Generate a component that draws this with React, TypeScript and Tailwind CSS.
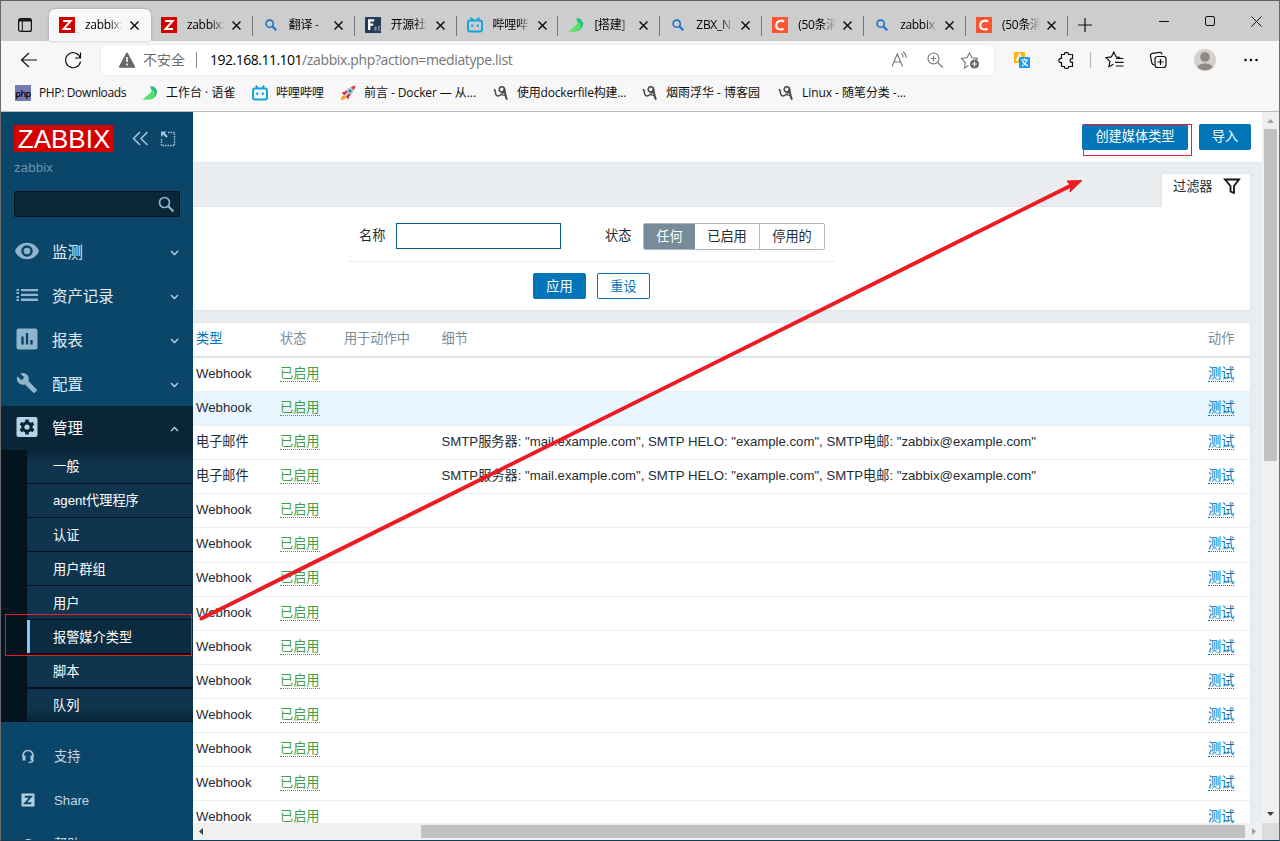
import React from 'react';
import clsx from 'clsx';

type IconName = 'zabbix' | 'search' | 'f2c' | 'bili' | 'bird' | 'csdn' | 'php' | 'rocket' | 'cnblogs';

interface Tab {
  icon: IconName;
  title: string;
}

const TABS: Tab[] = [
  { icon: 'zabbix', title: 'zabbix:' },
  { icon: 'zabbix', title: 'zabbix:' },
  { icon: 'search', title: '翻译 -' },
  { icon: 'f2c', title: '开源社' },
  { icon: 'bili', title: '哔哩哔' },
  { icon: 'bird', title: '[搭建]' },
  { icon: 'search', title: 'ZBX_N' },
  { icon: 'csdn', title: '(50条消' },
  { icon: 'search', title: 'zabbix_' },
  { icon: 'csdn', title: '(50条消' },
];

const BOOKMARKS: { icon: IconName; title: string; box: string }[] = [
  { icon: 'php', title: 'PHP: Downloads', box: 'w-[127px] tracking-[-0.36px]' },
  { icon: 'bird', title: '工作台 · 语雀', box: 'w-[110px]' },
  { icon: 'bili', title: '哔哩哔哩', box: 'w-[88px]' },
  { icon: 'rocket', title: '前言 - Docker — 从...', box: 'w-[153px] tracking-[-0.08px]' },
  { icon: 'cnblogs', title: '使用dockerfile构建...', box: 'w-[149px] tracking-[-0.2px]' },
  { icon: 'cnblogs', title: '烟雨浮华 - 博客园', box: 'w-[136px]' },
  { icon: 'cnblogs', title: 'Linux - 随笔分类 -...', box: 'w-[140px] tracking-[-0.05px]' },
];

const SUBMENU = ['一般', 'agent代理程序', '认证', '用户群组', '用户', '报警媒介类型', '脚本', '队列'];

const SMTP = 'SMTP服务器: "mail.example.com", SMTP HELO: "example.com", SMTP电邮: "zabbix@example.com"';

const ROWS = [
  { type: 'Webhook', details: '' },
  { type: 'Webhook', details: '' },
  { type: '电子邮件', details: SMTP },
  { type: '电子邮件', details: SMTP },
  ...Array.from({ length: 10 }, () => ({ type: 'Webhook', details: '' })),
];

function SiteIcon({ name }: { name: IconName }) {
  switch (name) {
    case 'zabbix':
      return (
        <svg width="16" height="16" viewBox="0 0 16 16" className="shrink-0">
          <rect width="16" height="16" fill="#d40000" />
          <path d="M4.2 4h7.4L4.6 12h7.4" fill="none" stroke="#fff" strokeWidth="2" />
        </svg>
      );
    case 'search':
      return (
        <svg width="16" height="16" viewBox="0 0 16 16" className="shrink-0" fill="none" stroke="#1b74c9">
          <circle cx="6.7" cy="6.7" r="3.6" strokeWidth="1.6" />
          <path d="M9.3 9.3l4 4" strokeWidth="2" />
        </svg>
      );
    case 'f2c':
      return (
        <svg width="16" height="16" viewBox="0 0 16 16" className="shrink-0">
          <rect width="16" height="16" fill="#253b57" />
          <path d="M4.2 13V3.4h5M4.2 7.6h4" fill="none" stroke="#fff" strokeWidth="2.3" />
          <path d="M9.5 10.2h1.7v1.4H9.8v1.6h1.7M15.5 9.6h-1.8v3.6h1.8" fill="none" stroke="#b9c4d0" strokeWidth=".8" />
        </svg>
      );
    case 'bili':
      return (
        <svg width="16" height="16" viewBox="0 0 16 16" className="shrink-0" fill="none" stroke="#13a5dc" strokeWidth="2">
          <path d="M3.8 .6l2 2.800M12.200 .6l-2 2.800" />
          <rect x="1" y="3.600" width="14" height="11" rx="2" />
          <path d="M5.200 7.400v2.600M10.800 7.400v2.600" />
        </svg>
      );
    case 'bird':
      return (
        <svg width="16" height="16" viewBox="0 0 16 16" className="shrink-0">
          <path d="M8.200 1.400c3-.6 5 .5 5.400 2.400.3 1.200 2 .9 1.500 2.700-.4 5-4.200 8.300-8.600 8L10.500 8z" fill="#25bf79" />
          <path d="M10.900 4.800C8.500 8.500 4.500 11 .5 14.600c5.500.4 10.500-.2 11.800-3.900.8-2.400.1-4.200-1.400-5.900z" fill="#5be06a" />
        </svg>
      );
    case 'csdn':
      return (
        <svg width="16" height="16" viewBox="0 0 16 16" className="shrink-0">
          <rect width="16" height="16" fill="#fc5531" />
          <path d="M12 4.600C9.400 2.700 4.600 3.500 4.200 8c-.3 4.300 4.500 5.500 7.400 3.600" fill="none" stroke="#fff" strokeWidth="2.100" />
        </svg>
      );
    case 'php':
      return (
        <span className="flex h-4 w-4 shrink-0 items-center justify-center bg-[#777bb3]">
          <span className="text-[9px] leading-none font-semibold tracking-[-0.5px] text-black">php</span>
        </span>
      );
    case 'rocket':
      return (
        <svg width="16" height="16" viewBox="0 0 16 16" className="shrink-0">
          <path d="M1 15c0-3 1-4.500 3.200-4.800l1.600 1.600C5.500 14 4 15 1 15z" fill="#f9a01b" />
          <path d="M4.500 6.500L1.500 8l2 1.300zM9.500 11.500L8 14.500l-1.300-2z" fill="#d7263d" />
          <path d="M3.800 9.500C5 5.500 8 2.500 12 2l2 2c-.5 4-3.500 7-7.500 8.200z" fill="#b9c6d1" />
          <path d="M11 2.300C12.800 1 14.500.8 15.500.5c-.3 1-.5 2.700-1.800 4.500z" fill="#e0304a" />
          <path d="M2.800 8.600L6 5.500l1.500 1.200L4 10.300zM7.500 13l3.100-3.200L9.300 8.500l-3.600 3.600z" fill="#d7263d" />
          <circle cx="10" cy="6" r="1.500" fill="#287bb5" />
        </svg>
      );
    case 'cnblogs':
      return (
        <svg width="16" height="16" viewBox="0 0 16 16" className="shrink-0" fill="none" stroke="#4a4648">
          <path d="M.8 4.500c1.400.2 1.500 1.300 1.600 2.800.2 3.600 2 4.200 4.400 3.100 2.400-1.200 3.700-2.600 4.600-4.400" strokeWidth="1.500" />
          <circle cx="8.800" cy="4.300" r="2.600" strokeWidth="1.500" />
          <path d="M11.400 3.600c.4 3.600.9 7.400 2.600 11" strokeWidth="2" />
          <path d="M8 9.500l5 1.500" strokeWidth="1.200" />
        </svg>
      );
  }
}

function CloseX() {
  return (
    <svg width="11" height="11" viewBox="0 0 11 11" className="shrink-0">
      <path d="M1.500 1.500l8 8M9.500 1.500l-8 8" stroke="#111" strokeWidth="1.500" />
    </svg>
  );
}

function TabStrip() {
  return (
    <div className="flex h-10 shrink-0 bg-[#cdcdcd] pt-2">
      <div className="flex w-12 justify-center pt-[9px]">
        <svg width="14" height="14" viewBox="0 0 14 14" fill="none" stroke="#111">
          <rect x=".6" y=".6" width="12.800" height="12.800" rx="2" strokeWidth="1.200" />
          <path d="M1 2.300h12" strokeWidth="2.400" />
          <path d="M4.300 3v10" />
        </svg>
      </div>
      {TABS.map((tab, i) => (
        <div
          key={i}
          className={clsx(
            'relative flex w-[101.9px] items-center pl-[10px]',
            i === 0 && 'rounded-t-md bg-[#f7f7f7] shadow-[0_0_3px_rgba(0,0,0,0.25)]'
          )}
        >
          <SiteIcon name={tab.icon} />
          <span className="ml-[10px] w-[38px] text-[12px] leading-5 tracking-[-0.3px] whitespace-nowrap text-black [mask-image:linear-gradient(to_right,black_65%,transparent)]">
            {tab.title}
          </span>
          <span className="ml-[6px] flex">
            <CloseX />
          </span>
          {i > 0 && <span className="absolute top-[7px] right-0 h-5 w-px bg-[#777]" />}
        </div>
      ))}
      <div className="flex flex-1 items-center">
        <svg width="14" height="14" viewBox="0 0 14 14" className="ml-[10px]">
          <path d="M7 0v14M0 7h14" stroke="#111" strokeWidth="1.200" />
        </svg>
        <svg width="110" height="12" viewBox="0 0 110 12" className="mb-2 ml-[67px]" fill="none" stroke="#111">
          <path d="M0 6.500h10" />
          <rect x="46.500" y="1.500" width="9" height="9" rx="1.500" />
          <path d="M92.500 1.500l10 10M102.500 1.500l-10 10" />
        </svg>
      </div>
    </div>
  );
}

function Toolbar() {
  return (
    <div className="flex h-[38px] shrink-0 items-center bg-[#f7f7f7] text-[14px]">
      <svg width="100" height="20" viewBox="0 0 100 20" fill="none" stroke="#111" strokeWidth="1.200" className="shrink-0">
        <path d="M36 10H20.500M28 3l-7.500 7L28 17" />
        <path d="M79.300 8a7.500 7.500 0 1 0 .2 3.600M79.500 2.500V8H74" />
      </svg>
      <div className="flex h-[30px] w-[893px] shrink-0 items-center rounded-[5px] bg-white pl-[17px] shadow-[0_0_2px_rgba(0,0,0,0.12)]">
        <svg width="18" height="16" viewBox="0 0 18 16">
          <path d="M9 1.200L16.500 15h-15z" fill="#666" stroke="#666" strokeWidth="1.500" strokeLinejoin="round" />
          <path d="M9 5v5M9 11.500v2" stroke="#fff" strokeWidth="1.600" />
        </svg>
        <span className="mb-[2px] ml-[7px] w-[43px] whitespace-nowrap text-[#6d6d6d]">不安全</span>
        <span className="ml-[10px] h-4 w-px bg-[#888]" />
        <span className="mb-[2px] ml-[13px] w-[681px] tracking-[-0.37px] whitespace-nowrap text-[#757575]">
          <span className="tracking-[-0.5px] text-black">192.168.11.101</span>/zabbix.php?action=mediatype.list
        </span>
        <svg width="92" height="18" viewBox="0 0 92 18" fill="none" stroke="#777" strokeWidth="1.100">
          <path d="M1 15.500L6.300 3l5.200 12.500M3 11h6.700M10.300 2.500a4 4 0 0 1 1.700 4M12 .8a7 7 0 0 1 3 6.200" />
          <circle cx="42.500" cy="7.500" r="5.500" />
          <path d="M46.500 11.500l5.500 5M42.500 4.800v5.400M39.800 7.500h5.400" />
          <path d="M77.500 14.500l-4 2.500.8-5.500-3.800-4 5.400-.8L78.500 2 81 6.700l5.500.8-2.500 2.400" />
          <circle cx="83.500" cy="13" r="4.500" fill="#666" stroke="none" />
          <path d="M83.500 10.500v5M81 13h5" stroke="#fff" />
        </svg>
      </div>
      <svg width="285" height="24" viewBox="0 0 285 24" fill="none" stroke="#111" strokeWidth="1.200" className="shrink-0">
        <rect x="20" y="4" width="11" height="11" rx="1" fill="#fbb41a" stroke="none" />
        <path d="M22.500 13l3-7 3 7M23.500 10.500h4" stroke="#fff" strokeWidth="1.500" />
        <rect x="25" y="9" width="11" height="11" rx="1" fill="#1e9bf0" stroke="none" />
        <path d="M27 12h7M30.500 10.500V12M28 18c2.500-1 4-3 4.500-6M28.500 13c1 2.500 3 4 5.500 5" stroke="#fff" strokeWidth="1.100" />
        <path d="M67.500 6.500h2.800a2.200 2.200 0 0 1 4.400 0h3.800v4.200c-3.200-.9-3.200 4.500 0 3.600v4.200h-3.800a2.200 2.200 0 0 1-4.400 0h-2.800v-4c-3.700.5-3.700-4.600 0-4z" />
        <path d="M96.500 4v16" stroke="#b8b8b8" />
        <path d="M119.500 16.300l-4.500 2.400.9-5.300-3.900-3.700 5.300-.8L119.800 4l2.400 4.900 4 .6M122 10.500h7.500M121 14.300h8.500M122 18h7.500" />
        <path d="M160.500 17c-1.500 0-2.300-.7-2.600-2L156.500 8.500c-.4-1.600.5-3 2-3.200l7-1c1.400-.2 2.300.5 2.500 2" />
        <rect x="161" y="8.500" width="11" height="11" rx="2.500" />
        <path d="M166.500 11v6M163.500 14h6" />
        <circle cx="211" cy="12" r="11" fill="#d3d0ce" stroke="none" />
        <circle cx="211" cy="9" r="4.800" fill="#8e8987" stroke="none" />
        <path d="M203.500 19.300c1.200-5 13.800-5 15 0-3.500 4-11.500 4-15 0z" fill="#8e8987" stroke="none" />
        <g fill="#111" stroke="none">
          <circle cx="251.500" cy="12" r="1.300" />
          <circle cx="257" cy="12" r="1.300" />
          <circle cx="262.500" cy="12" r="1.300" />
        </g>
      </svg>
    </div>
  );
}

function BookmarksBar() {
  return (
    <div className="flex h-[33px] shrink-0 border-b border-[#bbb] bg-[#f7f7f7] pb-1 pl-[14px] text-[12px] text-[#111]">
      {BOOKMARKS.map((b, i) => (
        <div key={i} className={clsx('flex shrink-0 items-center gap-2 whitespace-nowrap', b.box)}>
          <SiteIcon name={b.icon} />
          <span>{b.title}</span>
        </div>
      ))}
    </div>
  );
}

const MENU_ICONS = [
  <svg key="eye" width="26" height="22" viewBox="0 0 26 22">
    <path d="M1 11C5 0 21 0 25 11 21 22 5 22 1 11z" fill="#8fb4cb" />
    <circle cx="13" cy="11" r="4.500" fill="#8fb4cb" stroke="#0a466a" strokeWidth="2.500" />
  </svg>,
  <svg key="list" width="26" height="22" viewBox="0 0 26 22" fill="#8fb4cb">
    <path d="M2.500 5h2.500v2H2.500zM2.500 8h2.500v2H2.500zM2.500 12h2.500v2H2.500zM2.500 15h2.500v2H2.500z" />
    <path d="M7 5h17v2.300H7zM7 9.800h17v2.300H7zM7 14.600h17v2.300H7z" />
  </svg>,
  <svg key="chart" width="26" height="22" viewBox="0 0 26 22">
    <rect x="2.500" y=".5" width="21" height="21" rx="2" fill="#8fb4cb" />
    <path d="M8.500 8.500v8M13 5v11.500M17.500 12v4.500" stroke="#0a466a" strokeWidth="2.300" />
  </svg>,
  <svg key="wrench" width="26" height="22" viewBox="0 0 24 24">
    <path
      d="M22.700 19l-9.100-9.100c.9-2.300.4-5-1.500-6.900-2-2-5-2.400-7.400-1.300L9 6 6 9 1.600 4.700C.4 7.100.9 10.100 2.900 12.100c1.900 1.900 4.600 2.400 6.900 1.500l9.100 9.100c.4.4 1 .4 1.400 0l2.300-2.300c.5-.4.5-1.100.1-1.400z"
      fill="#8fb4cb"
    />
  </svg>,
  <svg key="gear" width="26" height="22" viewBox="0 0 26 22">
    <rect x="2.500" y="1" width="21" height="20" rx="2" fill="#b4d4e8" />
    <g stroke="#0a2537" fill="none">
      <circle cx="13" cy="11" r="4.200" strokeWidth="3.200" />
      <path d="M13 3.500v3M13 15.500v3M6.500 7.300l2.600 1.500M16.900 13.200l2.600 1.500M6.500 14.700l2.600-1.500M16.900 8.800l2.600-1.500" strokeWidth="3.500" />
    </g>
  </svg>,
];

function Sidebar() {
  return (
    <div className="flex w-48 shrink-0 flex-col overflow-hidden bg-[#0a466a] text-[#e4edf3]">
      <div className="flex h-10 shrink-0 pt-[13px] pl-[13px]">
        <div className="flex h-[27px] w-[100px] items-center justify-center bg-[#d40000] text-[26px] leading-none text-white">ZABBIX</div>
        <svg width="44" height="16" viewBox="0 0 44 16" className="mt-[6px] ml-[17.500px]" fill="none" stroke="#a3c4d9">
          <path d="M8 1L1.500 7.500 8 14M15.500 1L9 7.500l6.500 6.500" strokeWidth="1.600" />
          <path d="M36 1.500h6.500v13h-13V8" strokeWidth="1.400" strokeDasharray="1.500 1" />
          <path d="M29 .5h5.500l-1.700 1.800 3 3-1.500 1.500-3-3L29 6z" fill="#a3c4d9" stroke="none" />
        </svg>
      </div>
      <div className="h-[39px] shrink-0 pt-[8px] pl-[13px] text-[13.2px] leading-4 tracking-[0.15px] text-[#6793ad]">zabbix</div>
      <div className="ml-[13px] flex h-[26px] w-[166px] shrink-0 items-center justify-end rounded-[2px] border border-[#04141e] bg-[#0a2639] pr-1">
        <svg width="17" height="17" viewBox="0 0 17 17" fill="none" stroke="#8fb4cb">
          <circle cx="6.500" cy="6.500" r="5" strokeWidth="1.700" />
          <path d="M10.200 10.200l5.300 5.300" strokeWidth="2.200" />
        </svg>
      </div>

      <div className="mt-[13px] shrink-0">
        {['监测', '资产记录', '报表', '配置', '管理'].map((label, i) => (
          <div key={label} className={clsx('flex h-11 items-center pl-[13px] text-[15.4px]', i === 4 && 'bg-[#0a2537] text-white')}>
            <span className="mb-[2px]">{MENU_ICONS[i]}</span>
            <span className="mt-[2px] ml-3 w-[118px]">{label}</span>
            <svg width="9" height="6" viewBox="0 0 9 6" fill="none" stroke="#bcd3e1" strokeWidth="1.400" className={clsx('mt-[2px]', i === 4 && 'rotate-180')}>
              <path d="M1 1l3.500 3.500L8 1" />
            </svg>
          </div>
        ))}
      </div>

      <div className="h-[272px] shrink-0 bg-[#04141e] pl-[26px] text-[13.2px] text-white">
        {SUBMENU.map((label, i) => (
          <div key={label} className="h-[34.1px] pb-[1.500px]">
            <div
              className={clsx(
                'flex h-full items-center pt-[2px]',
                i === 5 ? 'border-l-[3px] border-[#7cc8ff] bg-[#0a2b40] pl-[23px]' : 'pl-[26px]',
                i === 0 && 'bg-linear-to-b from-[#0a2537] to-[#0f344d] to-40%',
                i === 7 && 'bg-linear-to-t from-[#0a2537] to-[#0f344d] to-40%',
                i > 0 && i < 7 && i !== 5 && 'bg-[#0f344d]'
              )}
            >
              {label}
            </div>
          </div>
        ))}
      </div>

      <div className="mt-3 shrink-0 text-[13.2px] text-[#c5d6e1]">
        <div className="flex h-11 items-center pl-5">
          <svg width="14" height="15" viewBox="0 0 14 15" fill="none" stroke="#a9c4d6">
            <path d="M2 8V6.500a5 5 0 0 1 10 0V8" strokeWidth="1.700" />
            <path d="M3 6.500v5M11 6.500v5" strokeWidth="3" />
            <path d="M12 11c0 2-1.500 2.500-4.500 2.500" strokeWidth="1.500" />
          </svg>
          <span className="mt-[2px] ml-[19px]">支持</span>
        </div>
        <div className="flex h-11 items-center pl-5">
          <svg width="14" height="14" viewBox="0 0 14 14">
            <rect x=".5" y=".5" width="13" height="13" rx="1" fill="#b9cfdd" />
            <path d="M3.800 3.800h6.100L4.100 10.200h6.200" fill="none" stroke="#0a466a" strokeWidth="1.900" />
          </svg>
          <span className="mt-[2px] ml-[19px]">Share</span>
        </div>
        <div className="flex h-11 items-center pl-5">
          <span className="w-[14px] text-center text-[15px] font-bold">?</span>
          <span className="mt-[2px] ml-[19px]">帮助</span>
        </div>
      </div>
    </div>
  );
}

function Filter() {
  return (
    <div className="flex shrink-0 flex-col">
      <div className="z-10 -mb-px ml-auto flex h-[34px] w-[90px] justify-between border border-b-0 border-[#dfe4e7] bg-white pt-[4px] pr-[9px] pl-[11px]">
        <span className="pt-px leading-4">过滤器</span>
        <svg width="18" height="16" viewBox="0 0 18 16" fill="none" stroke="#111" strokeWidth="1.800">
          <path d="M2 1.500h14l-5 6.500v7L7.500 13.500V8z" />
        </svg>
      </div>
      <div className="h-[105px] border border-l-0 border-[#dfe4e7] bg-white pt-4">
        <div className="ml-[155px] flex h-[39px] w-[487px] border-b border-[#ebeef0] pl-[11px]">
          <span className="w-[37px] leading-[25px]">名称</span>
          <input className="h-[26px] w-[165px] border border-[#0a5f94] bg-white" />
          <span className="ml-[44px] w-[38px] leading-[25px]">状态</span>
          <div className="flex h-[27px] w-[182px] overflow-hidden rounded-[2px] border border-[#acbbc2] leading-[25px]">
            <span className="w-[51px] bg-[#768d99] text-center text-white">任何</span>
            <span className="w-[65px] border-r border-[#acbbc2] text-center">已启用</span>
            <span className="flex-1 text-center">停用的</span>
          </div>
        </div>
        <div className="flex gap-[11px] pt-[11px] pl-[340px] leading-[22px]">
          <button className="h-[26px] w-[53px] rounded-[2px] border border-[#0275b8] bg-[#0275b8] pt-[2px] text-white">应用</button>
          <button className="h-[26px] w-[53px] rounded-[2px] border border-[#0275b8] bg-white pt-[2px] text-[#0275b8]">重设</button>
        </div>
      </div>
    </div>
  );
}

const COLS = 'grid grid-cols-[84px_64px_97.5px_766.5px_1fr] items-center pl-[3px]';

function MediaTypes() {
  return (
    <div className="mt-[11px] border-t border-r border-[#dfe4e7] bg-white">
      <div className={clsx(COLS, 'h-[35px] border-b-2 border-[#dfe4e7] pb-[2px] text-[#768d99]')}>
        <span className="text-[#0275b8]">类型</span>
        <span>状态</span>
        <span>用于动作中</span>
        <span>细节</span>
        <span>动作</span>
      </div>
      {ROWS.map((row, i) => (
        <div key={i} className={clsx(COLS, 'h-[34.1px] border-b border-[#ebeef0] pb-[1.500px]', i === 1 && 'bg-[#e8f5ff]')}>
          <span>{row.type}</span>
          <span>
            <a className="border-b border-dotted border-[#429e47] text-[#429e47]">已启用</a>
          </span>
          <span />
          <span className="whitespace-nowrap">{row.details}</span>
          <span>
            <a className="border-b border-dotted border-[#0275b8] text-[#0275b8]">测试</a>
          </span>
        </div>
      ))}
    </div>
  );
}

function Scrollbar() {
  return (
    <div className="flex w-[17px] shrink-0 flex-col items-center bg-[#f0f0f0]">
      <svg width="17" height="17" viewBox="0 0 17 17">
        <path d="M5 11h7L8.500 7z" fill="#a0a0a0" />
      </svg>
      <div className="h-[332px] w-[13px] bg-[#c1c1c1]" />
      <svg width="17" height="17" viewBox="0 0 17 17" className="mt-auto">
        <path d="M5 6h7l-3.500 4z" fill="#404040" />
      </svg>
    </div>
  );
}

export default function App() {
  return (
    <div className="relative flex h-[841px] w-[1280px] flex-col overflow-hidden border border-t-[#5f5f5f] border-r-[#6a6a6a] border-b-[#123c55] border-l-[#6a6a6a] bg-white">
      <div className="flex shrink-0 flex-col font-['Open_Sans','Noto_Sans_CJK_SC',sans-serif]">
        <TabStrip />
        <Toolbar />
        <BookmarksBar />
      </div>
      <div className="flex min-h-0 flex-1 font-['Liberation_Sans','Noto_Sans_CJK_SC',sans-serif] text-[13.2px] text-[#1f2c33]">
        <Sidebar />
        <div className="flex min-w-0 flex-1 flex-col">
          <div className="flex min-h-0 flex-1">
            <div className="flex min-w-0 flex-1 flex-col overflow-hidden bg-[#e9edf0]">
              <div className="flex h-[51px] shrink-0 justify-end gap-[11px] border-b border-[#dfe4e7] bg-white pt-3 pr-[11px]">
                <button className="h-[26px] w-[106px] rounded-[2px] bg-[#0275b8] leading-6 text-white">创建媒体类型</button>
                <button className="h-[26px] w-[52px] rounded-[2px] bg-[#0275b8] leading-6 text-white">导入</button>
              </div>
              <div className="pt-[10px] pr-[11px]">
                <Filter />
                <MediaTypes />
              </div>
            </div>
            <Scrollbar />
          </div>
          <div className="flex h-[17px] shrink-0 items-center bg-[#f0f0f0]">
            <svg width="17" height="17" viewBox="0 0 17 17">
              <path d="M10 5v7L6 8.500z" fill="#404040" />
            </svg>
            <div className="ml-[211px] h-[13px] w-[824px] bg-[#c1c1c1]" />
            <svg width="17" height="17" viewBox="0 0 17 17">
              <path d="M7 5v7l4-3.500z" fill="#a0a0a0" />
            </svg>
            <div className="h-[17px] flex-1 bg-[#dcdcdc]" />
          </div>
        </div>
      </div>

      {/* annotations drawn over the page */}
      <div className="absolute top-[613px] left-[4px] h-[42px] w-[187px] border border-[#ed1c24]" />
      <div className="absolute top-[123px] left-[1082px] h-[32px] w-[109px] border border-[#ed1c24]" />
      <svg width="890" height="446" viewBox="0 0 890 446" className="absolute top-[176px] left-[196px]">
        <path d="M4.500 441.500L876 7.500" stroke="#ed1c24" strokeWidth="4" strokeLinecap="round" />
        <path d="M885 3.500l-15 .5 4 5-1 6z" fill="#ed1c24" stroke="#ed1c24" />
      </svg>
    </div>
  );
}
